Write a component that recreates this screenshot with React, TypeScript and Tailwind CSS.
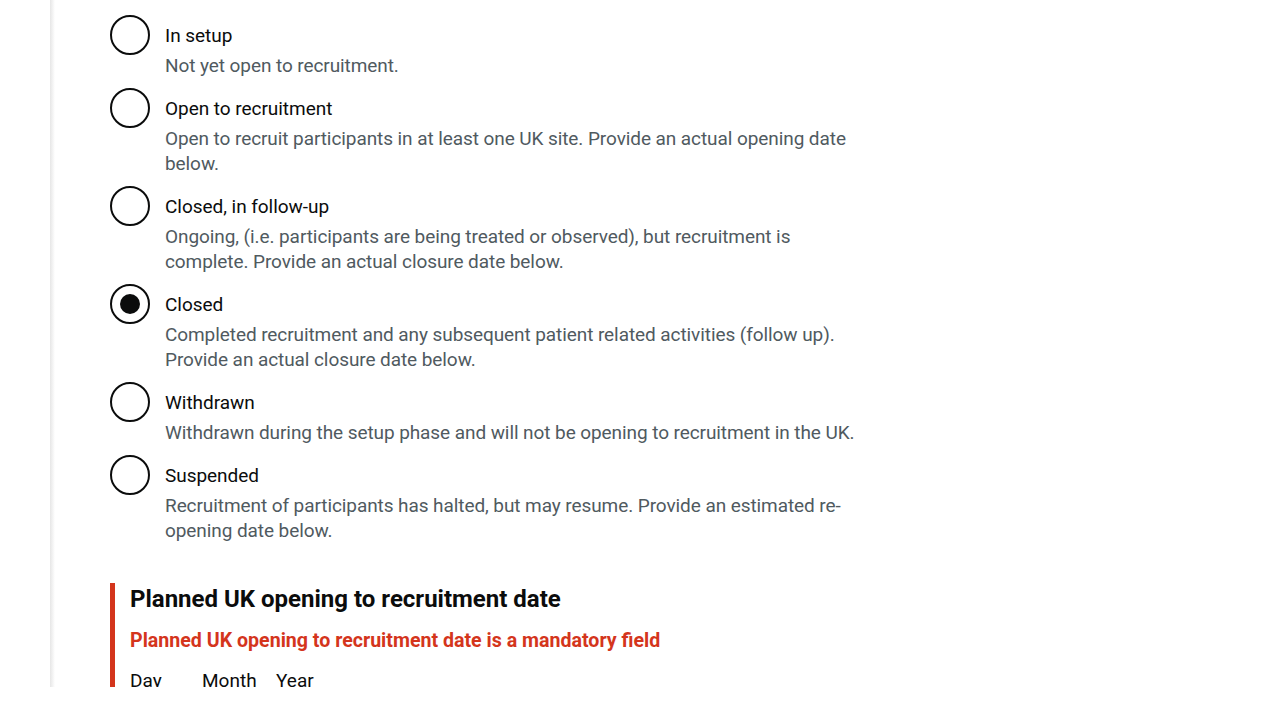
const options = [
  { label: "In setup", hint: "Not yet open to recruitment." },
  {
    label: "Open to recruitment",
    hint: "Open to recruit participants in at least one UK site. Provide an actual opening date below.",
  },
  {
    label: "Closed, in follow-up",
    hint: "Ongoing, (i.e. participants are being treated or observed), but recruitment is complete. Provide an actual closure date below.",
  },
  {
    label: "Closed",
    hint: "Completed recruitment and any subsequent patient related activities (follow up). Provide an actual closure date below.",
    checked: true,
  },
  {
    label: "Withdrawn",
    hint: "Withdrawn during the setup phase and will not be opening to recruitment in the UK.",
  },
  {
    label: "Suspended",
    hint: "Recruitment of participants has halted, but may resume. Provide an estimated re-opening date below.",
  },
];

function Radio({ checked }: { checked?: boolean }) {
  return (
    <div className="w-10 h-10 shrink-0 rounded-full border-2 border-[#0b0c0c] flex items-center justify-center">
      {checked && <div className="w-5 h-5 rounded-full bg-[#0b0c0c]" />}
    </div>
  );
}

export default function App() {
  return (
    <div
      className="bg-white text-[#0b0c0c] h-[720px] w-[1280px] overflow-hidden"
      style={{ fontFamily: "Roboto, 'Liberation Sans', sans-serif" }}
    >
      <div className="flex h-[687px] overflow-hidden">
        <div className="w-[50px] shrink-0" />
        <div className="w-[5px] shrink-0 bg-gradient-to-r from-[#e6e6e6] to-white" />
        <div className="pl-[55px] pt-[15px] w-[820px]">
          {/* Status radios */}
          <div>
            {options.map((o) => (
              <div key={o.label} className="flex mb-[10px]">
                <Radio checked={o.checked} />
                <div className="pl-[15px]">
                  <div className="pt-[8px] pb-[5px] text-[19px] leading-[25px] tracking-[-0.04px]">
                    {o.label}
                  </div>
                  <div className="text-[19px] leading-[25px] tracking-[-0.08px] text-[#505a5f] w-[700px]">
                    {o.hint}
                  </div>
                </div>
              </div>
            ))}
          </div>

          {/* Planned opening date */}
          <div className="mt-[40px] border-l-[5px] border-[#d4351c] pl-[15px] pt-[1px] pb-[20px]">
            <h2 className="text-[24px] leading-[30px] font-bold">
              Planned UK opening to recruitment date
            </h2>
            <p className="mt-[14px] text-[19.6px] leading-[25px] font-bold text-[#d4351c]">
              Planned UK opening to recruitment date is a mandatory field
            </p>
            <div className="mt-[15px] flex text-[19px] leading-[25px]">
              <div className="w-[72px]">Day</div>
              <div className="w-[74px]">Month</div>
              <div>Year</div>
            </div>
          </div>
        </div>
      </div>
    </div>
  );
}
